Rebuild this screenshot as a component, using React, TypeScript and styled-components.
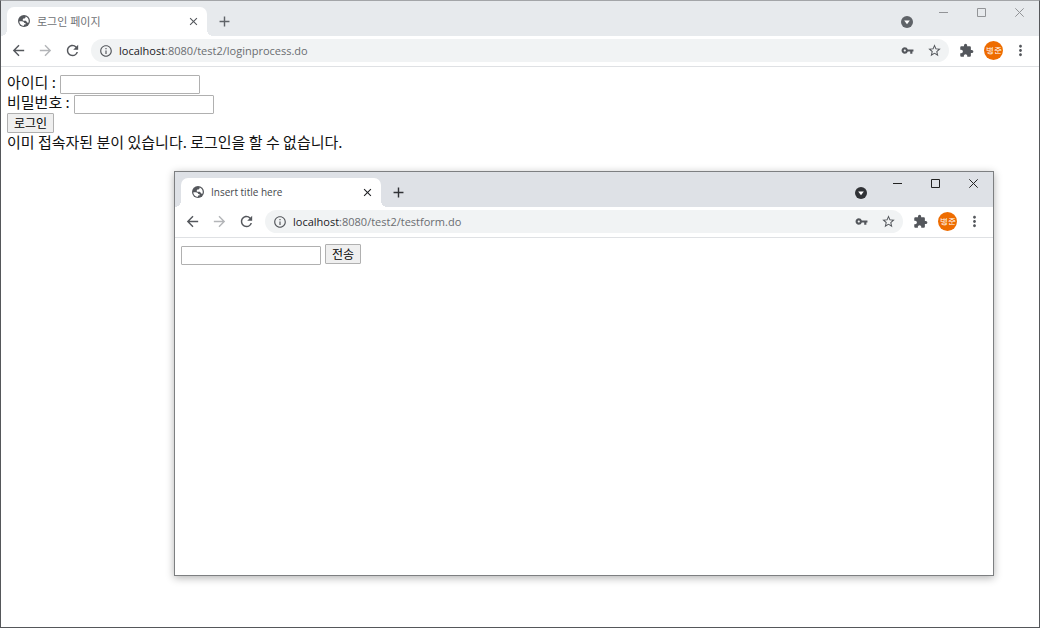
import React from 'react';
import styled, { createGlobalStyle } from 'styled-components';
import {
  MdAdd, MdArrowBack, MdArrowForward, MdClose, MdExtension, MdInfoOutline,
  MdMoreVert, MdRefresh, MdStarBorder, MdVpnKey,
} from 'react-icons/md';

const GlobalStyle = createGlobalStyle`
  *, *::before, *::after { box-sizing: border-box; }
  body {
    margin: 0;
    background: #fff;
    color: #111;
    font-family: "Open Sans", "Noto Sans CJK KR", sans-serif;
  }
  svg { display: block; flex: none; }
`;

const WindowFrame = styled.section<{ $active?: boolean }>`
  display: flex;
  flex-direction: column;
  min-height: 100%;
  background: #fff;
  border: 1px solid ${p => (p.$active ? '#7d7f81' : '#55575a')};
  border-top-color: ${p => (p.$active ? '#7d7f81' : '#a3a5a8')};
  box-shadow: ${p => (p.$active ? '0 2px 8px rgba(0, 0, 0, 0.3)' : 'none')};
`;

const Desktop = styled.div`
  position: relative;
  display: grid;
  min-height: 100vh;
`;

const FloatingWindow = styled.div`
  position: absolute;
  top: 171px;
  left: 174px;
  right: 46px;
  bottom: 52px;
  display: grid;
`;

const TabStrip = styled.header<{ $active?: boolean }>`
  display: flex;
  align-items: flex-end;
  height: 35px;
  padding: 0 1px 0 6px;
  background: ${p => (p.$active ? '#dee1e6' : '#e7eaed')};
  color: ${p => (p.$active ? '#303236' : '#5f6368')};
`;

const Tab = styled.div<{ $active?: boolean }>`
  position: relative;
  display: flex;
  align-items: center;
  width: 200px;
  height: 29px;
  padding: 0 6px 1px 11px;
  gap: 7px;
  border-radius: 7px 7px 0 0;
  background: #fff;
  color: ${p => (p.$active ? '#45484c' : '#6f7276')};
  font-size: 10px;

  &::before, &::after {
    content: "";
    position: absolute;
    bottom: 0;
    width: 6px;
    height: 6px;
  }
  &::before {
    right: 100%;
    background: radial-gradient(circle at 0 0, transparent 6px, #fff 6px);
  }
  &::after {
    left: 100%;
    background: radial-gradient(circle at 100% 0, transparent 6px, #fff 6px);
  }
`;

const TabTitle = styled.span`
  flex: 1;
  white-space: nowrap;

  &:lang(ko) { font-size: 11px; }
`;

const IconButton = styled.button<{ $size?: number; $color?: string }>`
  display: flex;
  flex: none;
  align-items: center;
  justify-content: center;
  width: ${p => p.$size ?? 27}px;
  height: ${p => p.$size ?? 27}px;
  padding: 0;
  border: 0;
  background: none;
  color: ${p => p.$color ?? '#54575c'};
`;

const NewTab = styled(IconButton)`
  margin: 0 0 1px 4px;
  color: inherit;
`;

const TabSearch = styled(IconButton)`
  margin: 0 0 1px auto;
  color: inherit;
`;

const WindowControls = styled.div`
  display: flex;
  align-self: flex-start;
  margin-left: 4px;
`;

const WindowControl = styled(IconButton)<{ $active?: boolean }>`
  width: 38px;
  height: 23px;
  color: ${p => (p.$active ? '#222' : '#929497')};
`;

const Toolbar = styled.nav`
  display: flex;
  align-items: center;
  height: 31px;
  padding: 0 5px 1px 4px;
  border-bottom: 1px solid #dfe1e4;
`;

const AddressBar = styled.div`
  display: flex;
  flex: 1;
  align-items: center;
  height: 23px;
  margin: 0 4px 0 5px;
  padding: 0 1px 0 8px;
  border-radius: 12px;
  background: #f1f3f4;
  color: #54575c;
`;

const Address = styled.span`
  flex: 1;
  padding-left: 6px;
  color: #6a6d71;
  font-size: 11px;
  line-height: 15px;
  white-space: nowrap;
`;

const Host = styled.span`
  color: #202124;
`;

const Avatar = styled.span`
  display: flex;
  align-items: center;
  justify-content: center;
  width: 19px;
  height: 19px;
  border-radius: 50%;
  background: #ee6c00;
  color: #fff;
  font-size: 8px;
  line-height: 8px;
  white-space: nowrap;
`;

const Page = styled.main`
  flex: 1;
  padding: 6px;
  font-family: "Noto Sans CJK KR", sans-serif;
  font-size: 15px;
  line-height: 18px;
`;

const Row = styled.div`
  display: flex;
  align-items: flex-start;
  height: 20px;
  gap: 4px;
`;

const TextBox = styled.input`
  width: 140px;
  height: 19px;
  margin: 2px 0 0;
  padding: 1px 2px;
  border: 1px solid #b0b0b0;
  border-radius: 1px;
  background: #fff;
`;

const SubmitButton = styled.button`
  height: 20px;
  padding: 0 6px;
  border: 1px solid #b0b0b0;
  border-radius: 1px;
  background: #efefef;
  color: #000;
  font-family: inherit;
  font-size: 12px;
  line-height: 18px;
`;

const Message = styled.p`
  margin: 0;
`;

function Globe() {
  return (
    <svg width="12" height="12" viewBox="0 0 16 16" aria-hidden="true">
      <circle cx="8" cy="8" r="8" fill="#54575c" />
      <path
        fill="#fff"
        d="M1.8 8.2H5c2 0 3.4 1 3.4 2.6H10v1.8H8v1.8C4.500 14.500 1.700 11.700 1.800 8.200ZM10.200 2.100c2.500.9 4.100 3.200 4.100 5.900 0 .7-.1 1.300-.3 1.900-.5.500-1.800.4-2.300-.5-.4-.8-.7-1.700-1.900-1.700H7.300c-.8 0-1-.6-1-1.200 0-1.100.8-1.700 1.800-1.700.9 0 2.100-.6 2.100-2.700Z"
      />
    </svg>
  );
}

type BrowserProps = {
  title: string;
  lang: string;
  path: string;
  active?: boolean;
  children: React.ReactNode;
};

function Browser({ title, lang, path, active, children }: BrowserProps) {
  return (
    <WindowFrame $active={active}>
      <TabStrip $active={active}>
        <Tab $active={active}>
          <Globe />
          <TabTitle lang={lang}>{title}</TabTitle>
          <IconButton $size={15} $color={active ? '#202124' : '#54575c'} aria-label="Close tab">
            <MdClose size={13} />
          </IconButton>
        </Tab>
        <NewTab aria-label="New tab"><MdAdd size={17} /></NewTab>
        <TabSearch aria-label="Search tabs">
          <svg width="12" height="12" viewBox="0 0 12 12">
            <circle cx="6" cy="6" r="6" fill="currentColor" />
            <path d="M3.2 4.5h5.6L6 8.3z" fill="#fff" />
          </svg>
        </TabSearch>
        <WindowControls>
          <WindowControl $active={active} aria-label="Minimize">
            <svg width="9" height="9" viewBox="0 0 9 9" stroke="currentColor"><path d="M0 4.5h9" /></svg>
          </WindowControl>
          <WindowControl $active={active} aria-label="Maximize">
            <svg width="9" height="9" viewBox="0 0 9 9" fill="none" stroke="currentColor"><path d="M.5.5h8v8h-8z" /></svg>
          </WindowControl>
          <WindowControl $active={active} aria-label="Close">
            <svg width="9" height="9" viewBox="0 0 9 9" stroke="currentColor"><path d="M.3.3l8.4 8.4M8.7.3L.3 8.7" /></svg>
          </WindowControl>
        </WindowControls>
      </TabStrip>
      <Toolbar>
        <IconButton aria-label="Back"><MdArrowBack size={17} /></IconButton>
        <IconButton $color="#b3b5b8" aria-label="Forward"><MdArrowForward size={17} /></IconButton>
        <IconButton aria-label="Reload"><MdRefresh size={17} /></IconButton>
        <AddressBar>
          <MdInfoOutline size={14} />
          <Address><Host>localhost</Host>:8080{path}</Address>
          <IconButton aria-label="Passwords"><MdVpnKey size={13} /></IconButton>
          <IconButton aria-label="Bookmark"><MdStarBorder size={15} /></IconButton>
        </AddressBar>
        <IconButton aria-label="Extensions"><MdExtension size={15} /></IconButton>
        <IconButton aria-label="Profile"><Avatar>병준</Avatar></IconButton>
        <IconButton aria-label="Menu"><MdMoreVert size={17} /></IconButton>
      </Toolbar>
      <Page>{children}</Page>
    </WindowFrame>
  );
}

export default function App() {
  return (
    <Desktop>
      <GlobalStyle />
      <Browser title="로그인 페이지" lang="ko" path="/test2/loginprocess.do">
        <Row>
          <label htmlFor="user-id">아이디 :</label>
          <TextBox id="user-id" type="text" />
        </Row>
        <Row>
          <label htmlFor="password">비밀번호 :</label>
          <TextBox id="password" type="password" />
        </Row>
        <Row><SubmitButton>로그인</SubmitButton></Row>
        <Message>이미 접속자된 분이 있습니다. 로그인을 할 수 없습니다.</Message>
      </Browser>
      <FloatingWindow>
        <Browser title="Insert title here" lang="en" path="/test2/testform.do" active>
          <Row>
            <TextBox type="text" aria-label="입력" />
            <SubmitButton>전송</SubmitButton>
          </Row>
        </Browser>
      </FloatingWindow>
    </Desktop>
  );
}
